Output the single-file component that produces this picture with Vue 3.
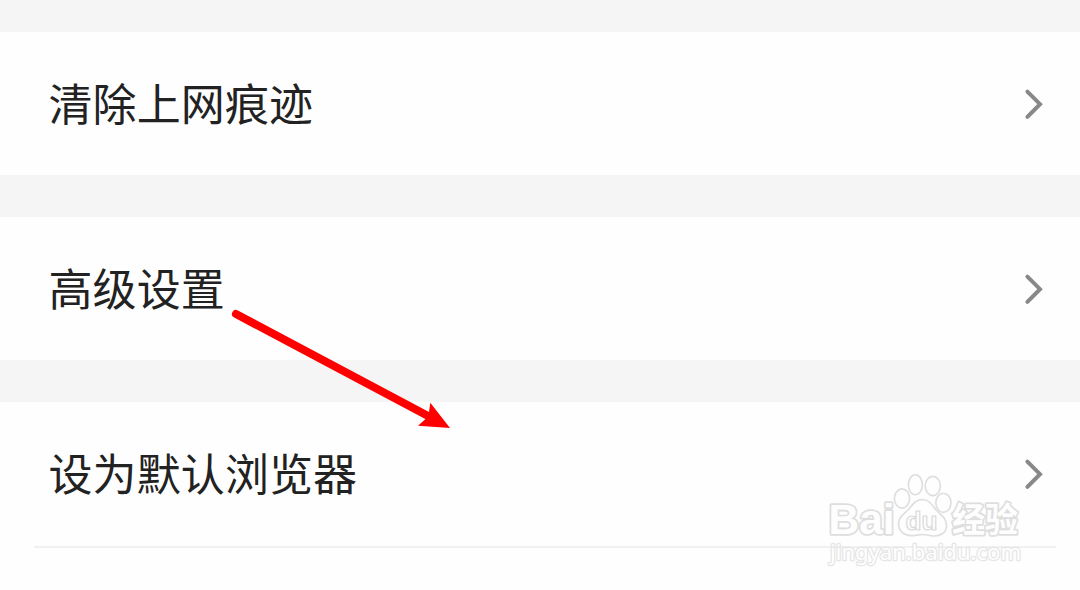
<template>
  <div class="settings">
    <div v-for="item in items" :key="item" class="row">
      <span class="label">{{ item }}</span>
      <svg class="chevron" width="20" height="32" viewBox="0 0 20 32">
        <path d="M3.4 3.6 L16 16.2 L3.4 28.8" />
      </svg>
    </div>
    <div class="next-row"></div>

    <svg class="overlay" width="1080" height="590" viewBox="0 0 1080 590">
      <g class="arrow">
        <line x1="236" y1="314" x2="430" y2="417" />
        <path d="M450 428 L430.3 402.8 L429 412 L425.5 419 L418 425.8 Z" />
      </g>

      <g class="watermark">
        <text class="latin" x="828.5" y="534" textLength="66" lengthAdjust="spacingAndGlyphs">Bai</text>
        <ellipse cx="902" cy="498.5" rx="7.6" ry="9.6" />
        <ellipse cx="915.4" cy="484.8" rx="7" ry="10" />
        <ellipse cx="932.8" cy="486" rx="7.6" ry="9.6" />
        <ellipse cx="943.4" cy="502.8" rx="7.6" ry="9.6" />
        <path d="M922.5 499.5 C929 499.5 932 505 936 510 C941 515 946.5 518 946.5 525.5 C946.5 533 940 536.5 933 536 C929 535.6 926 534.5 922.5 534.5 C918 534.5 915 535.8 911 535.6 C904 535.2 898.5 531 898.5 524 C898.5 517 904 514 908 510 C912.5 505 915 499.5 922.5 499.5 Z" />
        <text class="du" x="905.5" y="530" textLength="32" lengthAdjust="spacingAndGlyphs">du</text>
        <text class="cjk" x="952" y="531.5" textLength="66" lengthAdjust="spacingAndGlyphs">经验</text>
        <text class="url" x="830" y="560" textLength="191" lengthAdjust="spacingAndGlyphs">jingyan.baidu.com</text>
      </g>
    </svg>
  </div>
</template>

<script setup>
const items = ['清除上网痕迹', '高级设置', '设为默认浏览器']
</script>

<style>
body {
  margin: 0;
}
</style>

<style scoped>
.settings {
  position: relative;
  display: flex;
  flex-direction: column;
  gap: 42px;
  box-sizing: border-box;
  width: 1080px;
  height: 590px;
  padding-top: 32px;
  overflow: hidden;
  background: #f5f5f5;
  font-family: "Noto Sans CJK SC", sans-serif;
}
.row {
  display: flex;
  flex: none;
  align-items: center;
  justify-content: space-between;
  box-sizing: border-box;
  height: 143px;
  padding: 0 36px 0 48px;
  background: #fefefe;
}
.label {
  padding: 0 0 4px 0.5px;
  color: #222;
  font-size: 44px;
  line-height: 64px;
  letter-spacing: 0.1px;
}
.chevron {
  fill: none;
  stroke: #888;
  stroke-width: 4;
  stroke-linecap: round;
}
.next-row {
  flex: 1;
  margin-top: -42px;
  background: linear-gradient(#f1f1f1, #f1f1f1) 34px 1px / 1022px 2px no-repeat #fefefe;
}
.overlay {
  position: absolute;
  top: 0;
  left: 0;
}
.arrow line {
  stroke: #f00;
  stroke-width: 8;
  stroke-linecap: round;
}
.arrow path {
  fill: #f00;
}
.watermark {
  fill: #fefefe;
  stroke: #dedede;
  stroke-width: 1.6;
  stroke-linejoin: round;
}
.watermark text {
  stroke-width: 3.6;
  paint-order: stroke;
}
.latin {
  font: bold 42px "Liberation Sans", sans-serif;
}
.watermark .du {
  font: bold 26px "Liberation Sans", sans-serif;
  stroke: #dadada;
  stroke-width: 1.2;
  paint-order: normal;
}
.cjk {
  font: bold 34px "Noto Sans CJK SC", sans-serif;
}
.watermark .url {
  font: 22px "Noto Sans", sans-serif;
  stroke: #e6e6e6;
  stroke-width: 2.6;
}
</style>
